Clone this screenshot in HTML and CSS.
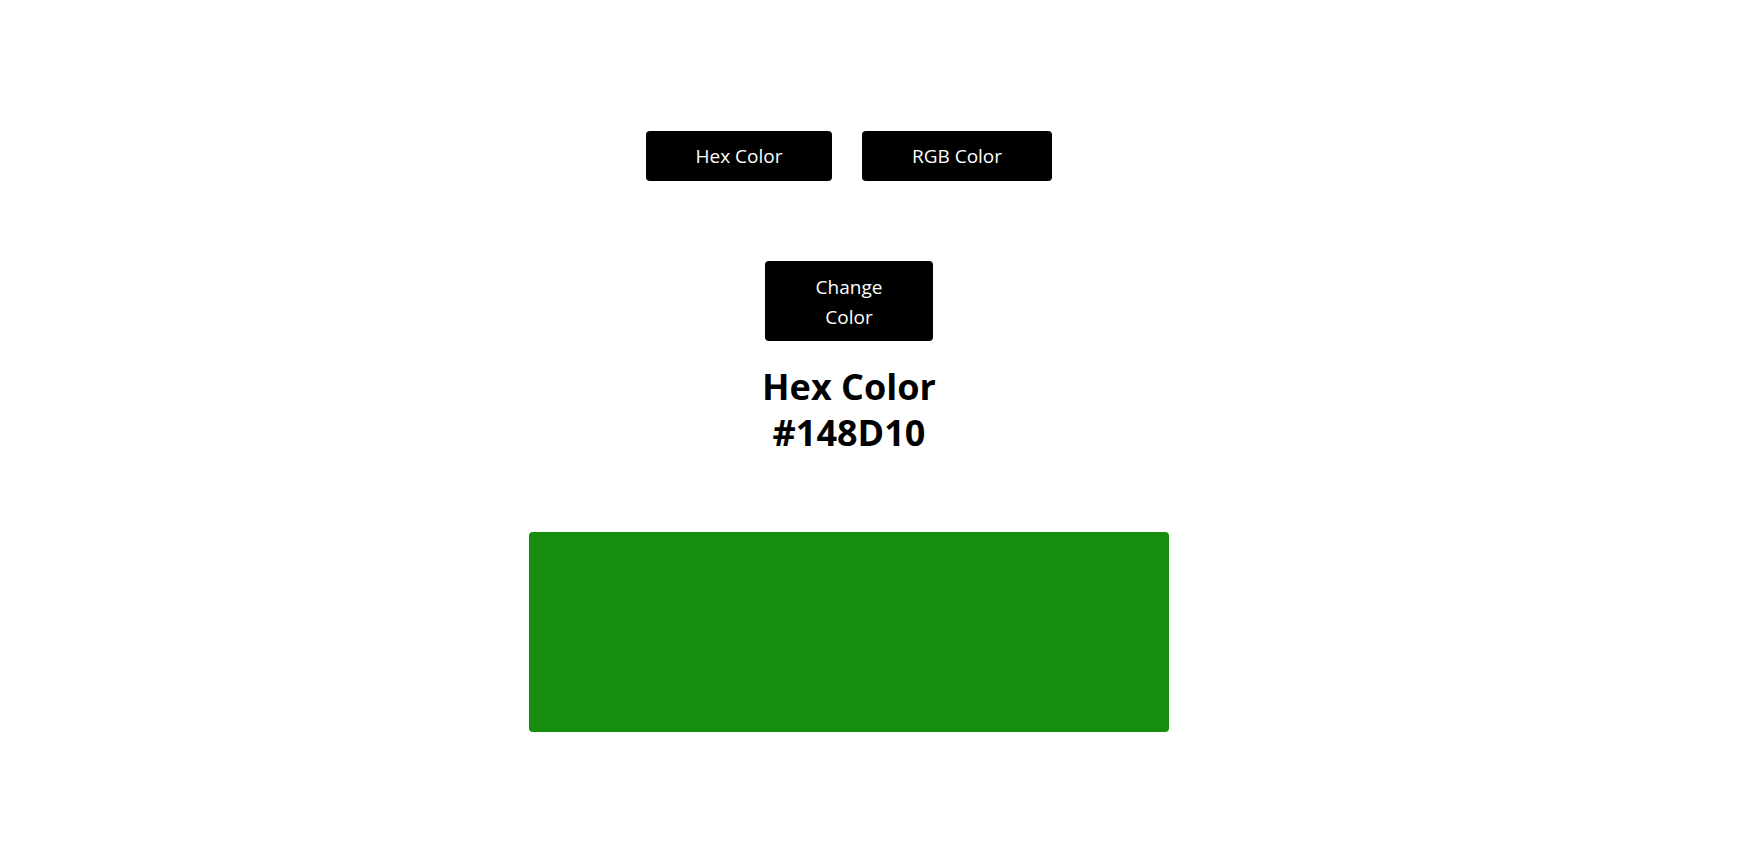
FILE: index.html
```html
<!DOCTYPE html>
<html>
<head>
<meta charset="utf-8">
<link rel="stylesheet" href="styles.css">
</head>
<body>
<main class="page">
  <div class="modes">
    <button class="btn mode">Hex Color</button>
    <button class="btn mode rgb">RGB Color</button>
  </div>
  <button class="btn change">Change<br>Color</button>
  <h1 class="title">Hex Color<br>#148D10</h1>
  <div class="swatch"></div>
</main>
</body>
</html>
```
FILE: styles.css
```css
html, body {
  margin: 0;
  padding: 0;
  background: #fff;
}
body {
  font-family: "Open Sans", "Noto Sans", sans-serif;
  color: #000;
}
.page {
  width: 1698px;
  display: flex;
  flex-direction: column;
  align-items: center;
  padding-top: 131px;
}
.modes {
  display: flex;
  gap: 30px;
}
.btn {
  background: #000;
  color: #fff;
  border: none;
  border-radius: 4px;
  font-family: inherit;
  font-size: 19px;
  line-height: 30px;
  padding: 0;
}
.mode {
  width: 186px;
  height: 50px;
}
.mode.rgb {
  width: 190px;
}
.change {
  margin-top: 80px;
  width: 168px;
  height: 80px;
  padding-top: 2px;
}
.title {
  margin: 23px 0 0;
  font-size: 36px;
  line-height: 46px;
  font-weight: 700;
  text-align: center;
}
.swatch {
  margin-top: 76px;
  width: 640px;
  height: 200px;
  border-radius: 4px;
  background: #148D10;
}
```
